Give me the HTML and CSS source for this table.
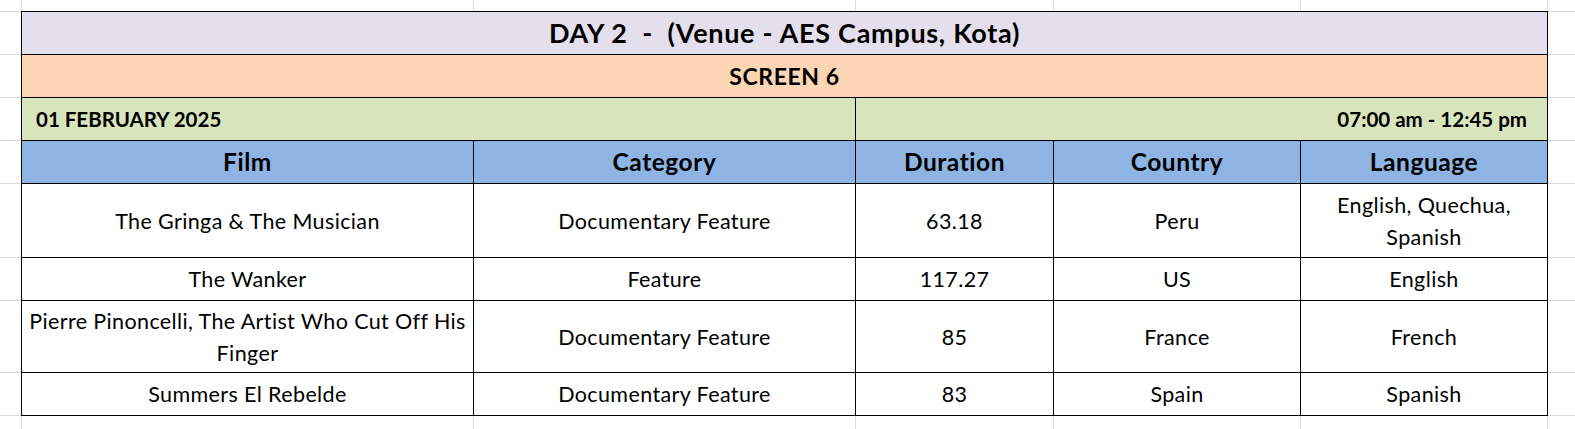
FILE: index.html
```html
<!DOCTYPE html>
<html>
<head>
<meta charset="utf-8">
<link rel="stylesheet" href="styles.css">
</head>
<body>
<div class="sheet">
  <div class="cell title span5">DAY 2  -  (Venue - AES Campus, Kota)</div>
  <div class="cell screen span5">SCREEN 6</div>
  <div class="cell date span2">01 FEBRUARY 2025</div>
  <div class="cell time span3">07:00 am - 12:45 pm</div>

  <div class="cell head">Film</div>
  <div class="cell head">Category</div>
  <div class="cell head">Duration</div>
  <div class="cell head">Country</div>
  <div class="cell head">Language</div>

  <div class="cell">The Gringa &amp; The Musician</div>
  <div class="cell">Documentary Feature</div>
  <div class="cell">63.18</div>
  <div class="cell">Peru</div>
  <div class="cell">English, Quechua,<br>Spanish</div>

  <div class="cell">The Wanker</div>
  <div class="cell">Feature</div>
  <div class="cell">117.27</div>
  <div class="cell">US</div>
  <div class="cell">English</div>

  <div class="cell">Pierre Pinoncelli, The Artist Who Cut Off His<br>Finger</div>
  <div class="cell">Documentary Feature</div>
  <div class="cell">85</div>
  <div class="cell">France</div>
  <div class="cell">French</div>

  <div class="cell">Summers El Rebelde</div>
  <div class="cell">Documentary Feature</div>
  <div class="cell">83</div>
  <div class="cell">Spain</div>
  <div class="cell">Spanish</div>
</div>
</body>
</html>
```
FILE: styles.css
```css
html, body {
  margin: 0;
  padding: 0;
}
body {
  width: 1575px;
  height: 429px;
  overflow: hidden;
  font-family: Lato, "Open Sans", sans-serif;
  color: #000;
  background-color: #fff;
  background-image:
    linear-gradient(to right,
      transparent 21px, #d5dae3 21px, #d5dae3 22px, transparent 22px,
      transparent 473px, #d5dae3 473px, #d5dae3 474px, transparent 474px,
      transparent 855px, #d5dae3 855px, #d5dae3 856px, transparent 856px,
      transparent 1053px, #d5dae3 1053px, #d5dae3 1054px, transparent 1054px,
      transparent 1300px, #d5dae3 1300px, #d5dae3 1301px, transparent 1301px,
      transparent 1547px, #d5dae3 1547px, #d5dae3 1548px, transparent 1548px),
    linear-gradient(to bottom,
      transparent 11px, #d5dae3 11px, #d5dae3 12px, transparent 12px,
      transparent 54px, #d5dae3 54px, #d5dae3 55px, transparent 55px,
      transparent 97px, #d5dae3 97px, #d5dae3 98px, transparent 98px,
      transparent 140px, #d5dae3 140px, #d5dae3 141px, transparent 141px,
      transparent 183px, #d5dae3 183px, #d5dae3 184px, transparent 184px,
      transparent 257px, #d5dae3 257px, #d5dae3 258px, transparent 258px,
      transparent 300px, #d5dae3 300px, #d5dae3 301px, transparent 301px,
      transparent 372px, #d5dae3 372px, #d5dae3 373px, transparent 373px,
      transparent 415px, #d5dae3 415px, #d5dae3 416px, transparent 416px);
}
.sheet {
  margin: 11px 0 0 21px;
  width: 1527px;
  box-sizing: border-box;
  border-left: 1px solid #000;
  border-top: 1px solid #000;
  display: grid;
  grid-template-columns: 452px 382px 198px 247px 247px;
  grid-template-rows: 43px 43px 43px 43px 74px 43px 72px 43px;
  background: #fff;
}
.cell {
  box-sizing: border-box;
  border-right: 1px solid #000;
  border-bottom: 1px solid #000;
  display: flex;
  align-items: center;
  justify-content: center;
  text-align: center;
  font-size: 21.5px;
  letter-spacing: 0.38px;
  line-height: 32px;
  white-space: pre;
}
.span5 { grid-column: span 5; }
.span2 { grid-column: span 2; }
.span3 { grid-column: span 3; }
.title {
  background: #e4dfec;
  font-weight: 700;
  font-size: 27px;
  letter-spacing: 0.7px;
}
.screen {
  background: #fcd5b4;
  font-weight: 700;
  font-size: 23px;
  letter-spacing: 0.6px;
}
.date {
  background: #d8e4bc;
  font-weight: 700;
  font-size: 20.5px;
  letter-spacing: 0;
  justify-content: flex-start;
  padding-left: 14px;
}
.time {
  background: #d8e4bc;
  font-weight: 700;
  font-size: 20.5px;
  letter-spacing: 0;
  justify-content: flex-end;
  padding-right: 20px;
}
.head {
  background: #8db4e2;
  font-weight: 700;
  font-size: 24.5px;
  letter-spacing: 0.55px;
}
```
